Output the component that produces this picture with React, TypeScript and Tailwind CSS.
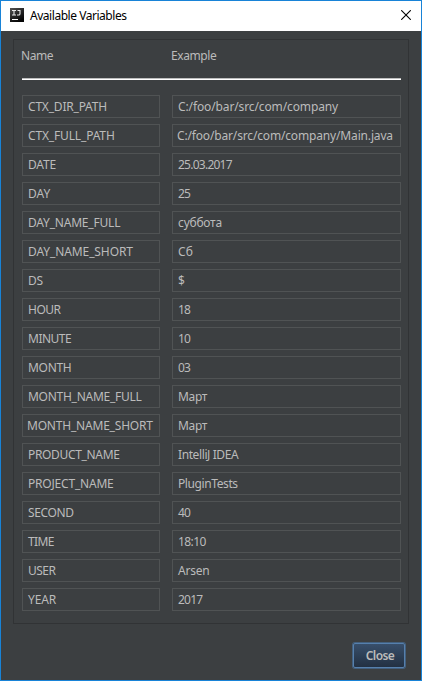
type Variable = {
  name: string;
  example: string;
  nameClass?: string;
  exampleClass?: string;
};

const variables: Variable[] = [
  { name: "CTX_DIR_PATH", example: "C:/foo/bar/src/com/company", nameClass: "tracking-[-0.2px]", exampleClass: "tracking-[-0.12px]" },
  { name: "CTX_FULL_PATH", example: "C:/foo/bar/src/com/company/Main.java", nameClass: "tracking-[-0.15px]", exampleClass: "-ml-px tracking-[-0.16px]" },
  { name: "DATE", example: "25.03.2017", nameClass: "tracking-[-0.2px]", exampleClass: "tracking-[-0.75px]" },
  { name: "DAY", example: "25", exampleClass: "tracking-[-0.8px]" },
  { name: "DAY_NAME_FULL", example: "суббота", nameClass: "tracking-[-0.2px]", exampleClass: "tracking-[-0.25px]" },
  { name: "DAY_NAME_SHORT", example: "Сб", nameClass: "tracking-[-0.1px]" },
  { name: "DS", example: "$", nameClass: "tracking-[-0.3px]" },
  { name: "HOUR", example: "18", nameClass: "tracking-[-0.5px]", exampleClass: "tracking-[-0.8px]" },
  { name: "MINUTE", example: "10", nameClass: "tracking-[-0.5px]", exampleClass: "tracking-[-0.8px]" },
  { name: "MONTH", example: "03", nameClass: "tracking-[-0.3px]", exampleClass: "tracking-[-0.8px]" },
  { name: "MONTH_NAME_FULL", example: "Март", nameClass: "tracking-[-0.27px]", exampleClass: "tracking-[-0.3px]" },
  { name: "MONTH_NAME_SHORT", example: "Март", nameClass: "-ml-px tracking-[-0.2px]", exampleClass: "tracking-[-0.3px]" },
  { name: "PRODUCT_NAME", example: "IntelliJ IDEA", nameClass: "tracking-[-0.33px]", exampleClass: "tracking-[-0.4px]" },
  { name: "PROJECT_NAME", example: "PluginTests", nameClass: "tracking-[-0.2px]", exampleClass: "tracking-[-0.4px]" },
  { name: "SECOND", example: "40", nameClass: "tracking-[-0.35px]", exampleClass: "tracking-[-0.8px]" },
  { name: "TIME", example: "18:10", nameClass: "tracking-[-0.6px]", exampleClass: "tracking-[-0.6px]" },
  { name: "USER", example: "Arsen", nameClass: "tracking-[-0.5px]", exampleClass: "tracking-[-0.2px]" },
  { name: "YEAR", example: "2017", nameClass: "tracking-[-0.1px]", exampleClass: "tracking-[-0.8px]" },
];

function Field({ text, className = "" }: { text: string; className?: string }) {
  return (
    <div className="flex h-[23px] items-center border border-[#505354] pl-[5px] whitespace-nowrap">
      <span className={className}>{text}</span>
    </div>
  );
}

function AppIcon() {
  return (
    <svg className="mb-0.5 h-3.5 w-3.5 shrink-0" viewBox="0 0 14 14">
      <defs>
        <linearGradient id="tile" x1="0" y1="0" x2="0.6" y2="1">
          <stop offset="0" stopColor="#555" />
          <stop offset="0.5" stopColor="#282828" />
          <stop offset="1" stopColor="#050505" />
        </linearGradient>
      </defs>
      <rect width="14" height="14" fill="url(#tile)" />
      <path d="M2 2.5h4M4 2.5v4.5M2 7h4M7.5 2.5h3M10 2.5v3.2q0 1.3-1.3 1.3H7" stroke="#e8e8e8" strokeWidth="1.1" fill="none" />
      <path d="M2 11.5h6" stroke="#fff" />
    </svg>
  );
}

export default function App() {
  return (
    <div className="flex h-[681px] w-[422px] flex-col border border-[#1883d7] bg-[#3c3f41] font-['Noto_Sans','Open_Sans',sans-serif] text-[12px] leading-4 text-[#bbbbbb]">
      <header className="flex h-[30px] shrink-0 items-center bg-white pr-2.5 pl-[9px] text-black">
        <AppIcon />
        <span className="ml-1.5 tracking-[-0.46px]">Available Variables</span>
        <svg className="mb-0.5 ml-auto h-2.5 w-2.5" viewBox="0 0 10 10">
          <path d="M.2.2l9.6 9.6M9.8.2l-9.6 9.6" stroke="#000" strokeWidth="1.1" fill="none" />
        </svg>
      </header>
      <main className="mt-2 ml-3 h-[585px] w-[396px] border border-[#313335] pr-[7px] pl-2">
        <div className="-ml-px grid h-[38px] grid-cols-[138px_229px] gap-x-3 pt-2 tracking-[-0.4px]">
          <span>Name</span>
          <span>Example</span>
        </div>
        <div className="h-0.5 border-t border-b border-t-[#bdbebe] border-b-white" />
        <div className="mt-[15px] grid grid-cols-[138px_229px] gap-x-3 gap-y-1.5">
          {variables.map((v) => [
            <Field key={v.name} text={v.name} className={v.nameClass} />,
            <Field key={v.name + "-example"} text={v.example} className={v.exampleClass} />,
          ])}
        </div>
      </main>
      <footer className="mt-[19px] mr-4 flex justify-end">
        <button className="h-[25px] w-[52px] rounded-[2px] border border-[#5680ad] bg-linear-to-b from-[#384f6b] to-[#233143] pl-0.5 font-semibold tracking-[-0.6px] shadow-[0_0_0_1px_#43607f]">
          Close
        </button>
      </footer>
    </div>
  );
}
